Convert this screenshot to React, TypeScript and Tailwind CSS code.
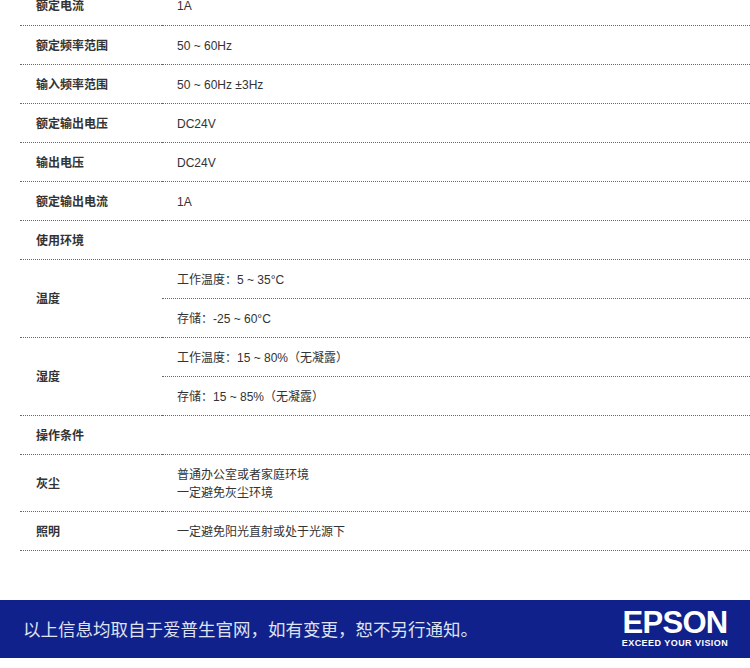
const sans = "font-['Liberation_Sans','Noto_Sans_CJK_SC',sans-serif]";

const Th = ({ children, rowSpan }: { children: React.ReactNode; rowSpan?: number }) => (
  <td rowSpan={rowSpan} className="w-[142px] border-b border-dotted border-[#666] pl-4 pt-[2px] font-bold align-middle">
    {children}
  </td>
);
const Td = ({ children }: { children?: React.ReactNode }) => (
  <td className="border-b border-dotted border-[#666] pl-[15px] pr-4 pb-[11px] pt-[13px] leading-[14px] align-middle">{children}</td>
);

const simple: [string, string][] = [
  ["额定电流", "1A"],
  ["额定频率范围", "50 ~ 60Hz"],
  ["输入频率范围", "50 ~ 60Hz ±3Hz"],
  ["额定输出电压", "DC24V"],
  ["输出电压", "DC24V"],
  ["额定输出电流", "1A"],
  ["使用环境", ""],
];

export default function App() {
  return (
    <div className={`${sans} h-[668px] w-[750px] overflow-hidden bg-white text-[12px] text-[#333]`}>
      <div className="-mt-[14px] pl-5">
        <table className="w-[730px] table-fixed border-collapse">
          <tbody>
            {simple.map(([k, v]) => (
              <tr key={k} className="h-[39px]">
                <Th>{k}</Th>
                <Td>{v}</Td>
              </tr>
            ))}
            <tr className="h-[39px]">
              <Th rowSpan={2}>温度</Th>
              <Td>工作温度：5 ~ 35°C</Td>
            </tr>
            <tr className="h-[39px]">
              <Td>存储：-25 ~ 60°C</Td>
            </tr>
            <tr className="h-[39px]">
              <Th rowSpan={2}>湿度</Th>
              <Td>工作温度：15 ~ 80%（无凝露）</Td>
            </tr>
            <tr className="h-[39px]">
              <Td>存储：15 ~ 85%（无凝露）</Td>
            </tr>
            <tr className="h-[39px]">
              <Th>操作条件</Th>
              <Td />
            </tr>
            <tr className="h-[57px]">
              <Th>灰尘</Th>
              <td className="border-b border-dotted border-[#666] pl-[15px] pr-4 pt-[2px] leading-[18px] align-middle">
                普通办公室或者家庭环境
                <br />
                一定避免灰尘环境
              </td>
            </tr>
            <tr className="h-[39px]">
              <Th>照明</Th>
              <Td>一定避免阳光直射或处于光源下</Td>
            </tr>
          </tbody>
        </table>
      </div>
      <div className="mt-[49px] flex h-[58px] items-center justify-between bg-[#10218b] pl-[23px] pr-[22px]">
        <div className="pt-[3px] text-[17.5px] text-[#dfe2f0]">以上信息均取自于爱普生官网，如有变更，恕不另行通知。</div>
        <div className="flex w-[106px] flex-col items-center pt-[2px] text-white">
          <div className="h-[26px] text-[31px] font-bold leading-[26px] tracking-[-0.7px]">EPSON</div>
          <div className="mt-[2px] h-[11px] whitespace-nowrap text-[9px] font-bold leading-[11px] tracking-[0.45px]">EXCEED YOUR VISION</div>
        </div>
      </div>
    </div>
  );
}
